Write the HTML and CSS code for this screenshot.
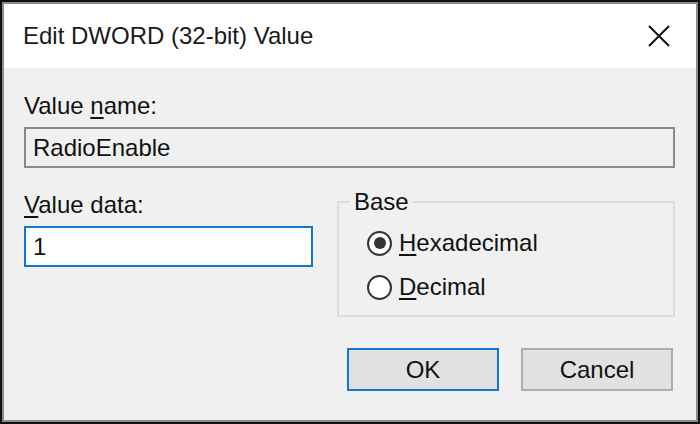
FILE: index.html
```html
<!DOCTYPE html>
<html lang="en">
<head>
  <meta charset="UTF-8" />
  <title>Edit DWORD (32-bit) Value</title>
  <link rel="stylesheet" href="styles.css">
</head>
<body>
  <div class="window">
    <div class="titlebar">
      <span class="title">Edit DWORD (32-bit) Value</span>
      <svg class="close" width="24" height="24" viewBox="0 0 24 24">
        <path d="M2 2 L22 22 M22 2 L2 22" stroke="#111" stroke-width="2" fill="none" />
      </svg>
    </div>

    <div class="content">
      <div class="label">Value <u>n</u>ame:</div>
      <div class="textbox readonly">RadioEnable</div>

      <div class="row">
        <div class="data-col">
          <div class="label"><u>V</u>alue data:</div>
          <div class="textbox focused">1</div>
        </div>

        <fieldset class="group">
          <legend>Base</legend>
          <div class="radio">
            <span class="dot checked"></span>
            <span><u>H</u>exadecimal</span>
          </div>
          <div class="radio">
            <span class="dot"></span>
            <span><u>D</u>ecimal</span>
          </div>
        </fieldset>
      </div>

      <div class="buttons">
        <div class="button default">OK</div>
        <div class="button">Cancel</div>
      </div>
    </div>
  </div>
</body>
</html>
```

FILE: styles.css
```css
* {
  box-sizing: border-box;
}

body {
  margin: 0;
  background: #f0f0f0;
  font-family: "Liberation Sans", Arial, sans-serif;
  font-size: 24px;
  color: #111;
}

u {
  text-decoration-thickness: 2px;
  text-underline-offset: 3px;
}

.window {
  width: 700px;
  height: 424px;
  border: 2px solid #111;
  box-shadow: inset 0 0 0 2px #8c8c8c;
  background: #f0f0f0;
  padding: 2px;
  display: flex;
  flex-direction: column;
}

.titlebar {
  height: 64px;
  background: #fff;
  display: flex;
  align-items: center;
  justify-content: space-between;
  padding: 0 25px 0 19px;
}

.title {
  color: #1a1a1a;
}

.content {
  padding: 24px 21px 0 20px;
}

.label {
  line-height: 28px;
  margin-bottom: 7px;
}

.textbox {
  height: 41px;
  border: 2px solid #7a7a7a;
  padding: 0 7px;
  line-height: 37px;
}

.textbox.readonly {
  background: #f0f0f0;
  border-color: #8a8a8a;
}

.textbox.focused {
  background: #fff;
  border-color: #0f78d4;
}

.row {
  display: grid;
  grid-template-columns: 289px 1fr;
  column-gap: 24px;
  margin-top: 23px;
}

.group {
  margin: 1px 0 0 0;
  padding: 9px 0 12px 28px;
  border: 2px solid #dcdcdc;
  height: 125px;
}

.group legend {
  padding: 0 4px;
  margin-left: -17px;
  line-height: 20px;
}

.radio {
  display: flex;
  align-items: center;
  gap: 7px;
  height: 44px;
}

.dot {
  width: 25px;
  height: 25px;
  border: 2px solid #333;
  border-radius: 50%;
  background: #fff;
  display: flex;
  align-items: center;
  justify-content: center;
}

.dot.checked::after {
  content: "";
  width: 12px;
  height: 12px;
  border-radius: 50%;
  background: #333;
}

.buttons {
  display: flex;
  justify-content: flex-end;
  gap: 22px;
  margin-top: 31px;
  padding-right: 2px;
}

.button {
  width: 152px;
  height: 43px;
  border: 2px solid #adadad;
  background: #e1e1e1;
  display: flex;
  align-items: center;
  justify-content: center;
}

.button.default {
  border-color: #0f78d4;
}
```
